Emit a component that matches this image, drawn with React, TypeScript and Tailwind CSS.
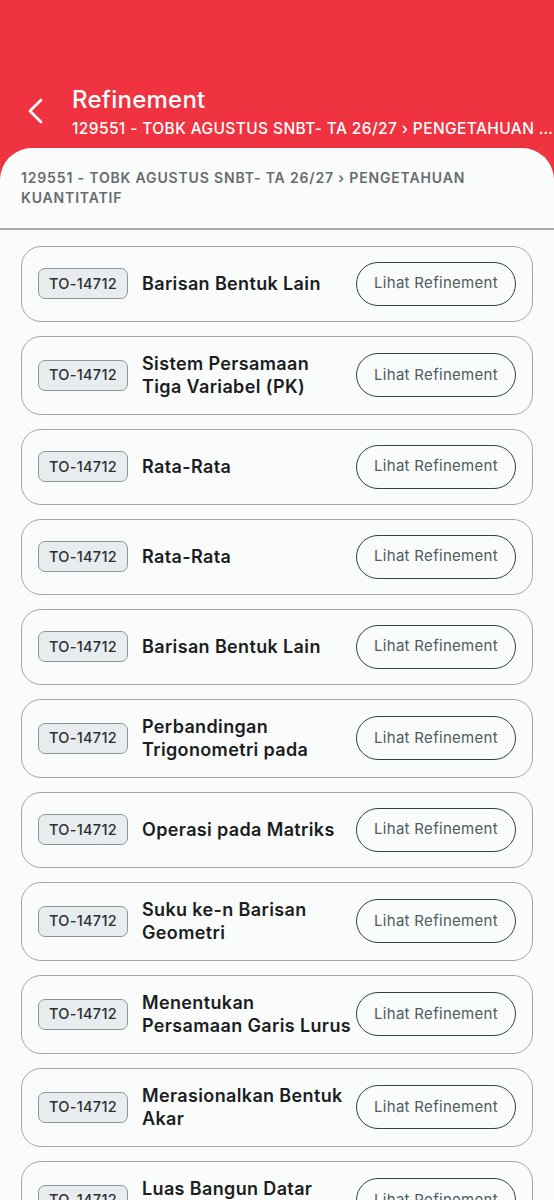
import React from "react";

type Item = { code: string; title: string };

const items: Item[] = [
  { code: "TO-14712", title: "Barisan Bentuk Lain" },
  { code: "TO-14712", title: "Sistem Persamaan\nTiga Variabel (PK)" },
  { code: "TO-14712", title: "Rata-Rata" },
  { code: "TO-14712", title: "Rata-Rata" },
  { code: "TO-14712", title: "Barisan Bentuk Lain" },
  { code: "TO-14712", title: "Perbandingan\nTrigonometri pada" },
  { code: "TO-14712", title: "Operasi pada Matriks" },
  { code: "TO-14712", title: "Suku ke-n Barisan\nGeometri" },
  { code: "TO-14712", title: "Menentukan\nPersamaan Garis Lurus" },
  { code: "TO-14712", title: "Merasionalkan Bentuk\nAkar" },
  { code: "TO-14712", title: "Luas Bangun Datar\nGabungan" },
];

function RefinementCard({ item }: { item: Item }) {
  return (
    <div className="flex items-center rounded-[20px] border border-[#a3a7a8] bg-[#fafbfb] px-4 py-[15px]">
      <span className="flex h-[31px] w-[90px] shrink-0 items-center justify-center rounded-[7px] border border-[#8c9799] bg-[#e9ecee] text-[14.5px] font-medium tracking-[0.02em] text-[#2b2f30]">
        {item.code}
      </span>
      <p className="ml-[14px] min-w-0 flex-1 whitespace-pre text-[18px] font-semibold leading-[23.5px] tracking-[0.02em] text-[#1c1d1f]">
        {item.title}
      </p>
      <button className="h-[44px] w-[160px] shrink-0 rounded-full border-[1.5px] border-[#2e4346] text-[15px] tracking-[0.02em] text-[#4f5b5c]">
        Lihat Refinement
      </button>
    </div>
  );
}

export default function App() {
  return (
    <div
      className="h-[1200px] w-full overflow-hidden bg-[#ef3340]"
      style={{ fontFamily: "Inter, 'Noto Sans', sans-serif" }}
    >
      <header className="flex h-[148px] items-start pt-[85px] text-white">
        <div className="flex h-[50px] w-[72px] items-center justify-center pt-[1px]">
          <svg width="20" height="26" viewBox="0 0 20 26" fill="none">
            <polyline
              points="15,2 4,13 15,24"
              stroke="white"
              strokeWidth="2.75"
              strokeLinecap="round"
              strokeLinejoin="round"
            />
          </svg>
        </div>
        <div className="min-w-0 flex-1">
          <h1 className="text-[24px] font-medium leading-[30px] tracking-[0.01em]">Refinement</h1>
          <p className="mt-1 truncate text-[15.5px] font-medium uppercase leading-[20px] tracking-[0.025em]">
            129551 - TOBK AGUSTUS SNBT- TA 26/27 › PENGETAHUAN KUANTITATIF
          </p>
        </div>
      </header>

      <main className="min-h-full rounded-t-[32px] bg-[#fafbfb]">
        <div className="px-[21px] pb-[21px] pt-[20px]">
          <p className="max-w-[475px] text-[14px] font-semibold uppercase leading-[19.5px] tracking-[0.06em] text-[#676b6d]">
            129551 - TOBK AGUSTUS SNBT- TA 26/27 › PENGETAHUAN KUANTITATIF
          </p>
        </div>
        <div className="h-[1.5px] bg-[#a9abac]" />
        <div className="flex flex-col gap-[14px] px-[21px] pt-4">
          {items.map((item, i) => (
            <RefinementCard key={i} item={item} />
          ))}
        </div>
      </main>
    </div>
  );
}
